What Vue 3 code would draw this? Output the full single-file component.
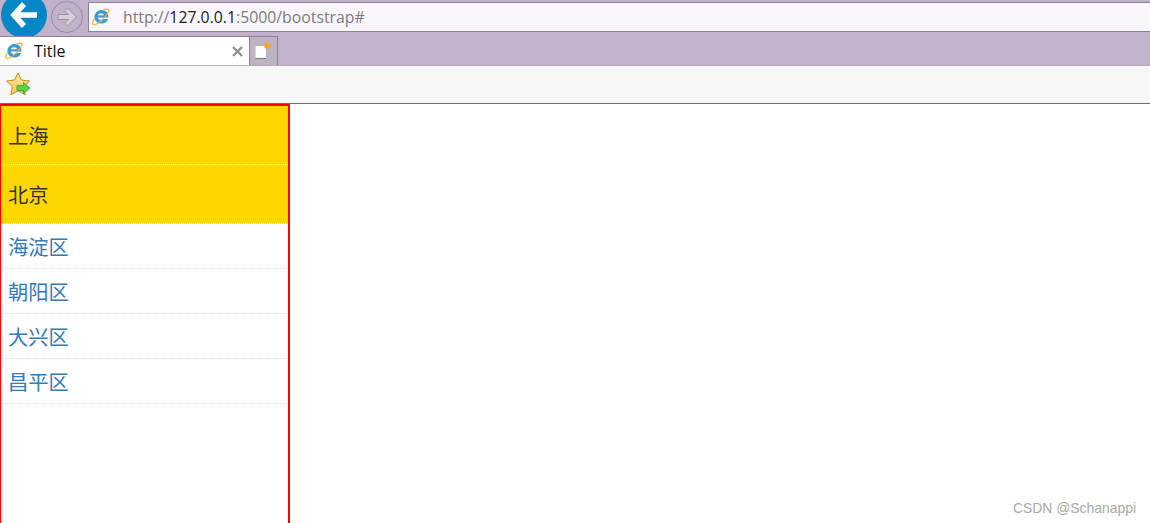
<script setup>
const cities = ['上海', '北京']
const districts = ['海淀区', '朝阳区', '大兴区', '昌平区']
</script>

<template>
  <div class="page">
    <header class="chrome">
      <div class="nav-row">
        <div class="back">
          <svg width="30" height="28" viewBox="0 0 30 28">
            <path d="M15 3 L5 14 L15 25 M5 14 H28" fill="none" stroke="#fff" stroke-width="5.6" />
          </svg>
        </div>
        <div class="forward">
          <svg width="22" height="20" viewBox="0 0 22 20">
            <path d="M11.5 1 L20.5 10 L11.5 19 L8.5 16 L12.5 12.5 H2 V7.5 H12.5 L8.5 4 Z" fill="#d6cddb" stroke="#9b8ea3" stroke-width="1" />
          </svg>
        </div>
        <div class="address">
          <svg class="ie" width="18" height="18" viewBox="0 0 17 17">
            <path d="M15.5 9 H5.6 C5.8 11.6 9.6 12.4 11.2 10.4 H15.2 C13.6 15.6 6.6 16 3.6 12.2 C1 9 2.6 3.4 7.2 2.2 C11.8 1 16.2 4.2 15.5 9 Z M5.6 6.8 H11.4 C11 4.2 6 4.2 5.6 6.8 Z" fill="#3b9ade" fill-rule="evenodd" />
            <path d="M2.4 9.5 C-0.4 14.5 0.4 16.6 3.6 15.6 C7.5 14.2 13 8.2 15.8 3.6 C16.8 1.2 14.6 0.2 10.6 2.2" fill="none" stroke="#efb320" stroke-width="1.1" />
          </svg>
          <span class="url"><span class="dim">http://</span><span class="host">127.0.0.1</span><span class="dim">:5000/bootstrap#</span></span>
        </div>
      </div>
      <div class="tab-row">
        <div class="tab">
          <svg class="ie" width="18" height="18" viewBox="0 0 17 17">
            <path d="M15.5 9 H5.6 C5.8 11.6 9.6 12.4 11.2 10.4 H15.2 C13.6 15.6 6.6 16 3.6 12.2 C1 9 2.6 3.4 7.2 2.2 C11.8 1 16.2 4.2 15.5 9 Z M5.6 6.8 H11.4 C11 4.2 6 4.2 5.6 6.8 Z" fill="#3b9ade" fill-rule="evenodd" />
            <path d="M2.4 9.5 C-0.4 14.5 0.4 16.6 3.6 15.6 C7.5 14.2 13 8.2 15.8 3.6 C16.8 1.2 14.6 0.2 10.6 2.2" fill="none" stroke="#efb320" stroke-width="1.1" />
          </svg>
          <span class="title">Title</span>
          <svg class="close" width="11" height="11" viewBox="0 0 11 11">
            <path d="M1 1 L10 10 M10 1 L1 10" stroke="#8f8f8f" stroke-width="2.4" />
          </svg>
        </div>
        <div class="new-tab">
          <svg width="18" height="18" viewBox="0 0 18 18">
            <rect x="1.5" y="4" width="10.5" height="12" fill="#fff" />
            <path d="M1.5 16.5 H12" stroke="#777" stroke-width="1" />
            <path d="M1 4 V16" stroke="#c9c9c9" stroke-width="1" />
            <path d="M13 0 V7 M9.5 3.5 H16.5 M10.5 1 L15.5 6 M15.5 1 L10.5 6" stroke="#f7a31e" stroke-width="1.3" />
          </svg>
        </div>
      </div>
      <div class="fav-row">
        <svg width="25" height="25" viewBox="0 0 25 25">
          <defs>
            <linearGradient id="starFill" x1="0" y1="0" x2="0" y2="1">
              <stop offset="0" stop-color="#ffe9a0" />
              <stop offset="1" stop-color="#f8c44e" />
            </linearGradient>
          </defs>
          <path d="M12 0.8 L15.4 8 L23.6 9 L17.6 14.6 L19.2 22.8 L12 18.8 L4.8 22.8 L6.4 14.6 L0.6 9 L8.6 8 Z" fill="url(#starFill)" stroke="#bf8d2c" stroke-width="1" stroke-linejoin="round" />
          <path d="M11 13.5 H17.5 V10.5 L24 16 L17.5 21.5 V18.5 H11 Z" fill="#5ed043" stroke="#2f9a32" stroke-width="0.8" />
        </svg>
      </div>
    </header>
    <main class="content">
      <aside class="sidebar">
        <div v-for="c in cities" :key="c" class="city">{{ c }}</div>
        <ul class="list">
          <li v-for="d in districts" :key="d" class="district"><a class="link">{{ d }}</a></li>
        </ul>
      </aside>
      <div class="mark">CSDN @Schanappi</div>
    </main>
  </div>
</template>

<style scoped>
.page {
  width: 1150px;
  height: 523px;
  overflow: hidden;
  display: flex;
  flex-direction: column;
  background: #fff;
  font-family: "Noto Sans CJK SC", "Liberation Sans", sans-serif;
}
.chrome {
  background: #c1b1c9;
  flex: none;
}
.nav-row {
  height: 36px;
  overflow: hidden;
  display: flex;
  align-items: flex-start;
  padding-left: 1px;
}
.back {
  width: 46px;
  height: 46px;
  margin-top: -8px;
  border-radius: 50%;
  background: #0586c5;
  display: flex;
  align-items: center;
  justify-content: center;
  flex: none;
}
.forward {
  width: 32px;
  height: 32px;
  margin: 1px 0 0 4px;
  border: 1px solid #9a8aa3;
  border-radius: 50%;
  display: flex;
  align-items: center;
  justify-content: center;
  flex: none;
  box-sizing: border-box;
}
.address {
  flex: 1;
  height: 30px;
  margin: 2px 0 0 5px;
  box-sizing: border-box;
  background: #f9f6fb;
  border: 1px solid #8d8097;
  border-right: none;
  display: flex;
  align-items: center;
  padding-left: 3px;
}
.url {
  margin-left: 13px;
  font: 15.8px "Open Sans", sans-serif;
}
.dim { color: #7c7c7c; }
.host { color: #1c1c1c; }
.tab-row {
  height: 29px;
  display: flex;
}
.tab {
  width: 249px;
  height: 29px;
  box-sizing: border-box;
  background: #fff;
  border-top: 1px solid #8d8097;
  display: flex;
  align-items: center;
  padding-left: 5px;
}
.title {
  margin-left: 11px;
  font: 16px "Open Sans", sans-serif;
  color: #111;
  flex: 1;
}
.close { margin-right: 6px; }
.new-tab {
  width: 29px;
  height: 29px;
  box-sizing: border-box;
  background: #bdb3c2;
  border: 1px solid #8d8097;
  border-bottom: none;
  display: flex;
  align-items: center;
  justify-content: center;
  padding-right: 2px;
}
.fav-row {
  height: 39px;
  box-sizing: border-box;
  background: #f7f7f7;
  border-top: 1px solid #b5a8bd;
  border-bottom: 1px solid #6f6f6f;
  display: flex;
  align-items: center;
  padding-left: 6px;
}
.content {
  flex: 1;
  display: flex;
  position: relative;
  min-height: 0;
}
.sidebar {
  width: 290px;
  box-sizing: border-box;
  border: 2px solid #f00;
  border-width: 2px 2px 0;
  border-left-width: 1.5px;
}
.city {
  height: 59px;
  box-sizing: border-box;
  background: #ffd700;
  border-bottom: 1px dotted #eee;
  padding-left: 7px;
  font-size: 20.3px;
  line-height: 59px;
  color: #333;
}
.list {
  list-style: none;
  margin: 0;
  padding: 0;
}
.district {
  height: 45px;
  box-sizing: border-box;
  border-bottom: 1px dotted #ddd;
  padding-left: 7px;
  font-size: 20.3px;
  line-height: 45px;
}
.link { color: #337ab7; }
.mark {
  position: absolute;
  right: 14px;
  bottom: 7px;
  font: 13.9px "Liberation Sans", sans-serif;
  color: #a9a9a9;
}
</style>
